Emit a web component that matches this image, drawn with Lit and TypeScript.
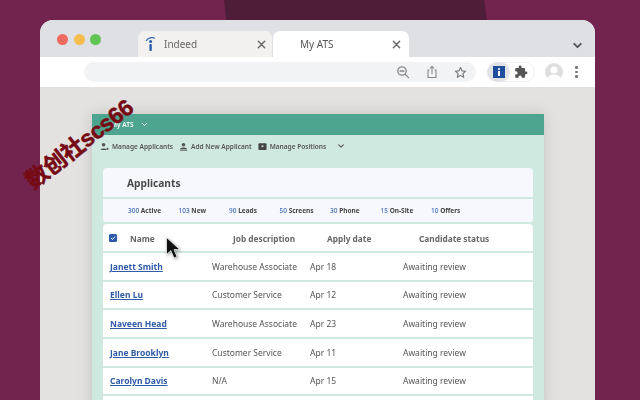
import { LitElement, html, css } from "lit";
import { customElement } from "lit/decorators.js";

const STATS = [["300","Active"],["103","New"],["90","Leads"],["50","Screens"],["30","Phone"],["15","On-Site"],["10","Offers"]];
const ROWS = [
  ["Janett Smith","Warehouse Associate","Apr 18"],
  ["Ellen Lu","Customer Service","Apr 12"],
  ["Naveen Head","Warehouse Associate","Apr 23"],
  ["Jane Brooklyn","Customer Service","Apr 11"],
  ["Carolyn Davis","N/A","Apr 15"],
];
const chev = (w: number, c: string, sw = 1.4) => html`<svg width=${w} height=${w} viewBox="0 0 10 10" fill="none" stroke=${c} stroke-width=${sw} stroke-linecap="round" stroke-linejoin="round"><path d="M2 3.5 5 6.5 8 3.5"/></svg>`;
const close = html`<svg width="9" height="9" viewBox="0 0 10 10" stroke="#666" stroke-width="1.6" stroke-linecap="round"><path d="M1.5 1.5 8.5 8.5M8.5 1.5 1.5 8.5"/></svg>`;

@customElement("app-root")
export class AppRoot extends LitElement {
  static styles = css`
    :host { display:block; width:640px; height:400px; overflow:hidden; position:relative; background:#72244f; font-family:"Noto Sans","Open Sans",sans-serif; padding:20px 0 0 40px; box-sizing:border-box; }
    .shade { position:absolute; inset:0; background:#4e1d38; clip-path:polygon(224px 0,484px 0,490px 40px,228px 40px); }
    .window { position:relative; width:555px; height:400px; background:#e3e2e0; border-radius:13px 13px 0 0; overflow:hidden; filter:blur(.5px); }
    .strip { height:37px; background:#dfe0e4; display:flex; position:relative; }
    .lights { display:flex; gap:5.5px; padding:14px 0 0 17px; width:98px; box-sizing:border-box; flex:none; }
    .lights i { width:11px; height:11px; border-radius:50%; display:block; }
    .tabs { display:flex; align-items:flex-end; gap:1px; flex:1; }
    .tab { width:134px; height:26px; border-radius:7px 7px 0 0; background:#f2f1f0; display:flex; align-items:center; box-sizing:border-box; font-size:10px; color:#666; padding:0 6px 0 7px; }
    .tab.on { background:#fff; color:#555; width:136px; padding:0 8px 0 27px; }
    .tab span { flex:1; }
    .tab svg.fav { margin-right:8px; }
    .more { display:flex; padding:20px 12px 0 0; align-self:flex-start; }
    .toolbar { height:30px; background:#fff; display:flex; align-items:center; padding:0 0 0 44px; box-sizing:border-box; }
    .omni { width:392px; height:20px; border-radius:10px; background:#f1f3f4; display:flex; align-items:center; justify-content:flex-end; gap:12px; padding-right:9px; box-sizing:border-box; }
    .ext { margin-left:11px; width:48px; height:20px; border-radius:10px; border:1px solid #f0f0f0; box-sizing:border-box; display:flex; align-items:center; }
    .ext .bub { width:23px; height:20px; border-radius:10px; background:#e1e3e6; display:flex; align-items:center; justify-content:center; margin-left:-1px; }
    .ext .sq { width:12px; height:12px; background:#1f4e9c; display:flex; align-items:center; justify-content:center; }
    .ext svg.puz { margin-left:4px; }
    .avatar { margin-left:10px; width:18px; height:18px; border-radius:50%; background:#dedede; overflow:hidden; }
    .dots { margin-left:12px; display:flex; flex-direction:column; gap:2px; align-items:center; width:3px; }
    .dots i { width:2.6px; height:2.6px; border-radius:50%; background:#777; display:block; }
    .content { padding:27px 0 0 52px; }
    .panel { width:452px; height:300px; background:#cfe8e0; box-shadow:0 0 14px rgba(0,0,0,.14); }
    .head { height:21px; background:#4ea58f; color:#fff; font-size:6.5px; font-weight:600; display:flex; align-items:center; gap:8px; padding-left:19px; }
    .nav { height:22px; display:flex; align-items:center; font-size:6.55px; font-weight:600; color:#555; padding-left:8px; box-sizing:border-box; }
    .nav .item { display:flex; align-items:center; gap:3px; margin-right:6px; white-space:nowrap; }
    .nav svg.c { margin-left:5px; }
    .body { padding:11px 11px 0; display:flex; flex-direction:column; }
    .title { height:29px; padding-top:1px; background:#f6f8fd; border-radius:4px 4px 0 0; font-size:10.2px; font-weight:700; color:#4a4a4a; display:flex; align-items:center; padding-left:24px; box-sizing:border-box; margin-bottom:2px; }
    .stats { height:23px; background:#f6f8fd; display:grid; grid-template-columns:repeat(7,50.5px); align-items:center; padding-left:25px; font-size:6.5px; font-weight:700; color:#444; margin-bottom:2px; border-radius:0 0 3px 3px; }
    .stats b { font-weight:500; color:#3f6cb5; }
    .table { background:#fff; border-radius:4px 4px 0 0; height:200px; }
    .thead { height:27px; box-sizing:content-box; display:grid; grid-template-columns:21px 103px 94px 92px 1fr; align-items:center; padding-left:6px; font-size:8.3px; font-weight:700; color:#666; border-bottom:2px solid #cfe8e0; }
    .thead div:not(.check) { padding-top:2px; }
    .check { width:8px; height:8px; background:#2b5cab; border-radius:1.5px; display:flex; align-items:center; justify-content:center; }
    .row { height:26.65px; display:grid; grid-template-columns:102px 98px 93px 1fr; align-items:center; padding-left:7px; font-size:8.5px; color:#555; border-bottom:2px solid #cfe8e0; }
    .row a { color:#2f5ba8; font-weight:700; text-decoration:underline; text-underline-offset:1px; }
    .cursor { position:absolute; left:164px; top:236px; filter:drop-shadow(1px 1px 1.5px rgba(0,0,0,.4)); }
    .mark { position:absolute; left:15px; top:133px; font-family:"Liberation Sans","Noto Sans CJK SC",sans-serif; font-size:23px; font-weight:700; color:#760a14; -webkit-text-stroke:.5px #760a14; transform:rotate(-38deg); white-space:nowrap; letter-spacing:-.5px; line-height:1; }
  `;
  render() {
    return html`
      <div class="shade"></div>
      <div class="window">
        <div class="strip">
          <div class="lights"><i style="background:#ee6a5f"></i><i style="background:#f5bd4f"></i><i style="background:#61c554"></i></div>
          <div class="tabs">
            <div class="tab">
              <svg class="fav" width="11" height="16" viewBox="0 0 11 16" fill="none"><path d="M1 5C3 1.8 7 1 10 2.2" stroke="#3a66b0" stroke-width="1.2"/><circle cx="5.6" cy="5.6" r="1.5" fill="#2b5cab"/><rect x="4.4" y="8" width="2.4" height="7" rx="1" fill="#2b5cab"/></svg>
              <span>Indeed</span>${close}
            </div>
            <div class="tab on"><span>My ATS</span>${close}</div>
          </div>
          <div class="more">${chev(11, "#555", 1.7)}</div>
        </div>
        <div class="toolbar">
          <div class="omni">
            <svg width="14" height="14" viewBox="0 0 14 14" fill="none" stroke="#888" stroke-width="1.3"><circle cx="6" cy="6" r="4.2"/><path d="M9.2 9.2 12.6 12.6M4 6H8" stroke-linecap="round"/></svg>
            <svg style="margin-left:4px" width="12" height="14" viewBox="0 0 12 14" fill="none" stroke="#888" stroke-width="1.1"><path d="M3.5 5H2V12.5H10V5H8.5M6 9V1.5M4 3.4 6 1.5 8 3.4"/></svg>
            <svg style="margin-left:4px" width="13" height="13" viewBox="0 0 14 14" fill="none" stroke="#777" stroke-width="1.2" stroke-linejoin="round"><path d="M7 1.6 8.6 5.2 12.6 5.6 9.6 8.2 10.5 12.2 7 10.1 3.5 12.2 4.4 8.2 1.4 5.6 5.4 5.2Z"/></svg>
          </div>
          <div class="ext">
            <div class="bub"><div class="sq"><svg width="8" height="10" viewBox="0 0 8 10" fill="#fff"><circle cx="4" cy="2" r="1.1"/><rect x="3" y="4" width="2" height="5"/></svg></div></div>
            <svg class="puz" width="14" height="14" viewBox="0 0 24 24" fill="#555"><path d="M20.5 11H19V7a2 2 0 0 0-2-2h-4V3.5a2.5 2.5 0 0 0-5 0V5H4a2 2 0 0 0-2 2v3.8h1.5a2.7 2.7 0 0 1 0 5.4H2V20a2 2 0 0 0 2 2h3.8v-1.5a2.7 2.7 0 0 1 5.4 0V22H17a2 2 0 0 0 2-2v-4h1.5a2.5 2.5 0 0 0 0-5z"/></svg>
          </div>
          <div class="avatar"><svg width="18" height="18" viewBox="0 0 18 18" fill="#fff"><circle cx="9" cy="7" r="3.6"/><ellipse cx="9" cy="16" rx="6.5" ry="4.5"/></svg></div>
          <div class="dots"><i></i><i></i><i></i></div>
        </div>
        <div class="content">
          <div class="panel">
            <div class="head"><span>My ATS</span>${chev(7, "#fff")}</div>
            <div class="nav">
              <div class="item"><svg width="9" height="9" viewBox="0 0 10 10" fill="#555"><circle cx="4" cy="3" r="2"/><path d="M0.5 9C.5 6.5 7.5 6.5 7.5 9Z"/><circle cx="8.3" cy="7.6" r="1.2"/></svg>Manage Applicants</div>
              <div class="item"><svg width="9" height="9" viewBox="0 0 10 10" fill="#555"><circle cx="5" cy="3" r="2"/><path d="M1 8C1 5.6 9 5.6 9 8Z"/><rect x="1" y="8.6" width="8" height="1"/></svg>Add New Applicant</div>
              <div class="item"><svg width="9" height="9" viewBox="0 0 10 10"><rect x=".5" y="1.5" width="9" height="7.5" rx="1" fill="#444"/><circle cx="5" cy="4.6" r="1.1" fill="#cfe8e0"/></svg>Manage Positions</div>
              <svg class="c" width="8" height="8" viewBox="0 0 10 10" fill="none" stroke="#555" stroke-width="1.3" stroke-linecap="round" stroke-linejoin="round"><path d="M2 3.5 5 6.5 8 3.5"/></svg>
            </div>
            <div class="body">
              <div class="title">Applicants</div>
              <div class="stats">${STATS.map(([n, l]) => html`<div><b>${n}</b> ${l}</div>`)}</div>
              <div class="table">
                <div class="thead">
                  <div class="check"><svg width="6" height="6" viewBox="0 0 6 6" fill="none" stroke="#fff" stroke-width="1"><path d="M1 3 2.5 4.5 5 1.5"/></svg></div>
                  <div>Name</div><div>Job description</div><div>Apply date</div><div>Candidate status</div>
                </div>
                ${ROWS.map(r => html`<div class="row"><div><a>${r[0]}</a></div><div>${r[1]}</div><div>${r[2]}</div><div>Awaiting review</div></div>`)}
              </div>
            </div>
          </div>
        </div>
      </div>
      <svg class="cursor" width="18" height="24" viewBox="0 0 18 24"><path d="M2.5 1.5V18.5L6.8 14.6 10 22 13 20.7 10 13.6H15.8Z" fill="#111" stroke="#fff" stroke-width=".7"/></svg>
      <div class="mark">数创社scs66</div>
    `;
  }
}
